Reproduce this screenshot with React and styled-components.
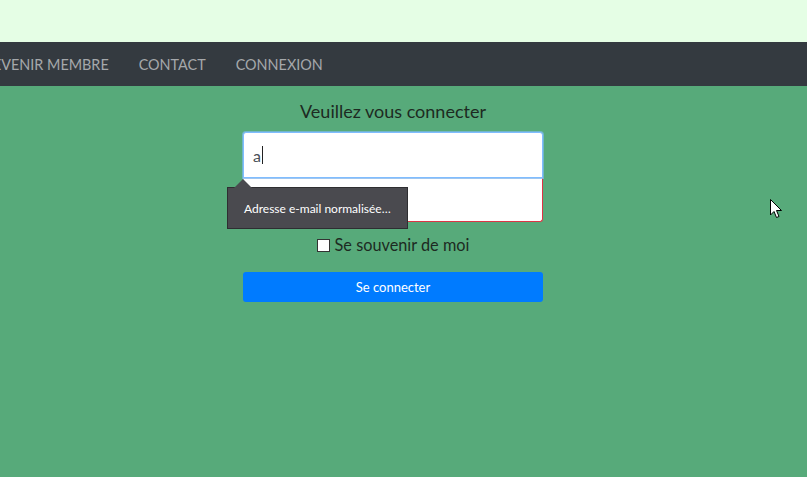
import React from 'react'
import styled, { createGlobalStyle } from 'styled-components'

const Global = createGlobalStyle`
  html, body {
    margin: 0;
    padding: 0;
    height: 100%;
    overflow: hidden;
  }
  body {
    background: #57aa7a;
    font-family: 'Trebuchet MS', Lato, 'DejaVu Sans', sans-serif;
  }
`

const Page = styled.div`
  position: relative;
  width: 807px;
  height: 477px;
  background: #57aa7a;
`

const TopBand = styled.div`
  height: 42px;
  background: #e5fee5;
`

const NavBar = styled.nav`
  height: 44px;
  background: #343a40;
  display: flex;
  align-items: center;
  overflow: hidden;
`

const NavList = styled.ul`
  display: flex;
  margin: 0 0 0 -33px;
  padding: 0;
  list-style: none;
`

const NavItem = styled.li`
  padding: 0 15px;
  color: #a5a8ab;
  font-size: 14.4px;
  white-space: nowrap;
`

const Main = styled.main`
  width: 786px;
  display: flex;
  flex-direction: column;
  align-items: center;
  padding-top: 14px;
`

const Title = styled.h1`
  margin: 0 0 10px;
  font-size: 18px;
  font-weight: normal;
  color: #1d2a22;
`

const Form = styled.form`
  position: relative;
  width: 300px;
  display: flex;
  flex-direction: column;
`

const Field = styled.div`
  height: ${(p) => p.$h}px;
  box-sizing: border-box;
  background: #fff;
  border: 1px solid ${(p) => (p.$focus ? '#80bdff' : '#ced4da')};
  border-right-color: ${(p) => (p.$invalid ? '#dc3545' : p.$focus ? '#80bdff' : '#ced4da')};
  border-bottom-color: ${(p) => (p.$invalid ? '#dc3545' : p.$focus ? '#80bdff' : '#ced4da')};
  border-radius: ${(p) => p.$radius};
  display: flex;
  align-items: center;
  padding: 0 9px;
  font-size: 16px;
  color: #495057;
  box-shadow: ${(p) => (p.$focus ? '0 0 0 1px rgba(128,189,255,0.6)' : 'none')};
  position: relative;
  z-index: ${(p) => (p.$focus ? 1 : 0)};
`

const Caret = styled.span`
  display: inline-block;
  width: 1px;
  height: 18px;
  background: #222;
  margin-left: 1px;
`

const Tooltip = styled.div`
  position: absolute;
  left: -16px;
  top: 55px;
  z-index: 3;
  width: 181px;
  height: 42px;
  box-sizing: border-box;
  background: #4a4a4f;
  border: 1px solid #2e2e31;
  color: #fff;
  font-size: 12px;
  display: flex;
  align-items: center;
  padding-left: 16px;

  &::before {
    content: '';
    position: absolute;
    left: 6px;
    top: -9px;
    border-left: 9px solid transparent;
    border-right: 9px solid transparent;
    border-bottom: 9px solid #4a4a4f;
  }
`

const Remember = styled.label`
  display: flex;
  align-items: center;
  justify-content: center;
  gap: 5px;
  margin-top: 13px;
  line-height: 20px;
  font-size: 16.3px;
  color: #1d2a22;
`

const Box = styled.span`
  width: 11px;
  height: 11px;
  background: #fff;
  border: 1px solid #333;
`

const Submit = styled.button`
  margin-top: 17px;
  height: 30px;
  border: none;
  border-radius: 3px;
  background: #007bff;
  color: #fff;
  font-family: inherit;
  font-size: 13px;
`

const Cursor = styled.svg`
  position: absolute;
  left: 770px;
  top: 199px;
`

export default function App() {
  return (
    <Page>
      <Global />
      <TopBand />
      <NavBar>
        <NavList>
          <NavItem>DEVENIR MEMBRE</NavItem>
          <NavItem>CONTACT</NavItem>
          <NavItem>CONNEXION</NavItem>
        </NavList>
      </NavBar>
      <Main>
        <Title>Veuillez vous connecter</Title>
        <Form onSubmit={(e) => e.preventDefault()}>
          <Field $h={46} $focus $radius="3px 3px 0 0">
            a<Caret />
          </Field>
          <Field $h={44} $invalid $radius="0 0 3px 3px" />
          <Tooltip>Adresse e-mail normalisée…</Tooltip>
          <Remember>
            <Box />
            Se souvenir de moi
          </Remember>
          <Submit type="button">Se connecter</Submit>
        </Form>
      </Main>
      <Cursor width="13" height="20" viewBox="0 0 13 20">
        <path d="M0.5 0.5 L0.5 16 L4 12.5 L6.5 18.5 L9 17.5 L6.5 11.5 L11.5 11.5 Z" fill="#fff" stroke="#000" strokeWidth="1" />
      </Cursor>
    </Page>
  )
}
